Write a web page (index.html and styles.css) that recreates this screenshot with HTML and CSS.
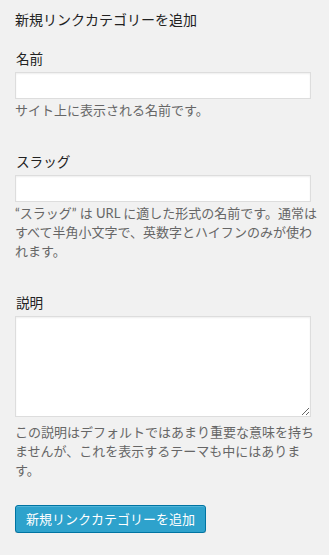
FILE: index.html
```html
<!DOCTYPE html>
<html lang="ja">
<head>
    <meta charset="UTF-8" />
    <meta name="viewport" content="width=device-width, initial-scale=1" />
    <title>新規リンクカテゴリーを追加</title>
    <link rel="stylesheet" href="styles.css">
</head>
<body>
    <div class="form-wrap">
        <h2 class="form-title">新規リンクカテゴリーを追加</h2>
        <form id="addcat" method="post">
            <div class="form-field">
                <label for="name">名前</label>
                <input type="text" id="name" name="name" />
                <p class="description">サイト上に表示される名前です。</p>
            </div>
            <div class="form-field">
                <label for="slug">スラッグ</label>
                <input type="text" id="slug" name="slug" />
                <p class="description">“スラッグ” は URL に適した形式の名前です。通常はすべて半角小文字で、英数字とハイフンのみが使われます。</p>
            </div>
            <div class="form-field">
                <label for="description">説明</label>
                <textarea id="description" name="description"></textarea>
                <p class="description">この説明はデフォルトではあまり重要な意味を持ちませんが、これを表示するテーマも中にはあります。</p>
            </div>
            <p class="submit">
                <button type="submit" class="button-primary">新規リンクカテゴリーを追加</button>
            </p>
        </form>
    </div>
</body>
</html>
```

FILE: styles.css
```css
/* Grundlayout */
* {
    box-sizing: border-box;
}
body {
    margin: 0;
    background: #f1f1f1;
    color: #444;
    font-family: "Lato", "Noto Sans CJK JP", sans-serif;
}

.form-wrap {
    width: 323px;
    padding: 10px 0 0 15px;
}

/* Überschrift */
.form-title {
    margin: 0 0 20px;
    font-size: 14px;
    line-height: 20px;
    font-weight: normal;
    color: #222;
}

/* Felder */
.form-field {
    margin-bottom: 33px;
}
.form-field label {
    display: block;
    margin: 0 0 3px 1px;
    font-size: 13.6px;
    line-height: 19px;
    color: #222;
}
.form-field input,
.form-field textarea {
    display: block;
    width: 296px;
    margin: 0;
    background: #fff;
    border: 1px solid #ddd;
    box-shadow: inset 0 1px 2px rgba(0,0,0,0.07);
    font: inherit;
    font-size: 13px;
    color: #333;
}
.form-field input {
    height: 27px;
    padding: 3px 5px;
}
.form-field textarea {
    height: 101px;
    padding: 2px 6px;
    margin-bottom: 6px;
}

.description {
    margin: 2px 0 0;
    font-size: 13px;
    line-height: 19px;
    color: #666;
}

/* Button */
.submit {
    margin: -8px 0 0;
}
.button-primary {
    height: 28px;
    padding: 0 10px 1px;
    font-family: inherit;
    font-size: 13px;
    line-height: 26px;
    color: #fff;
    background: #2ea2cc;
    border: 1px solid #0074a2;
    border-radius: 3px;
    box-shadow: inset 0 1px 0 rgba(120,200,230,0.5), 0 1px 0 rgba(0,0,0,0.15);
    cursor: pointer;
}
.button-primary:hover {
    background: #1e8cbe;
}
```
